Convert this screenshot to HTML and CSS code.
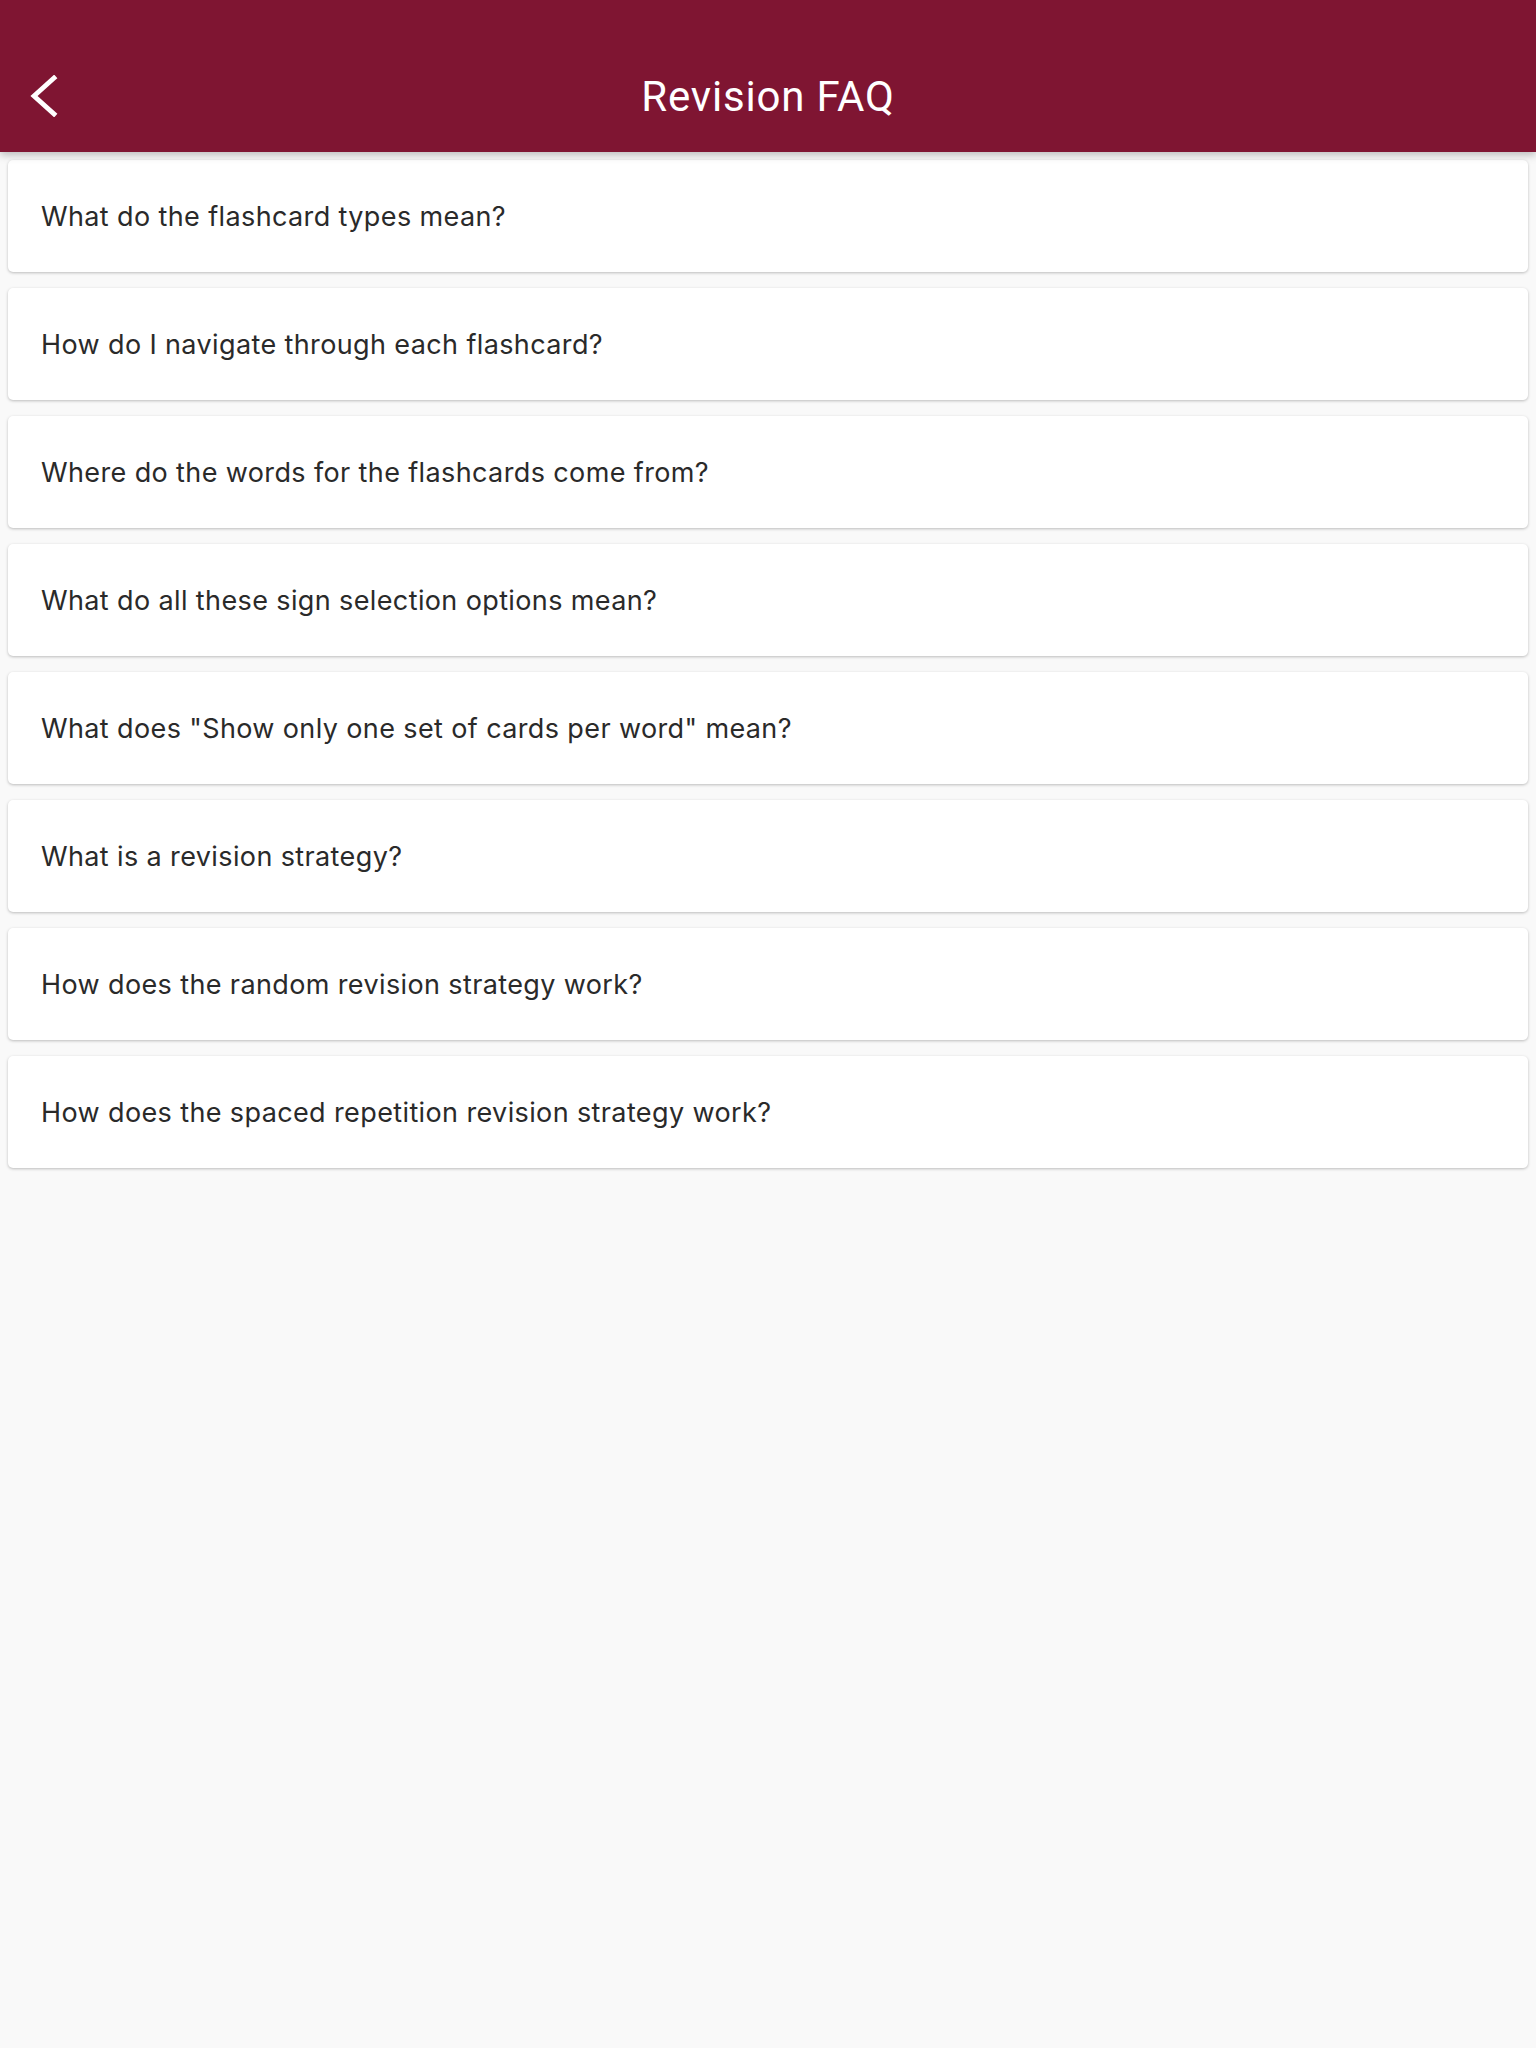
FILE: index.html
```html
<!DOCTYPE html>
<html>
<head>
<meta charset="utf-8">
<link rel="stylesheet" href="styles.css">
</head>
<body>
<header class="appbar">
  <button class="back" aria-label="Back">
    <svg width="28" height="42" viewBox="0 0 28 42"><path d="M24 3 L4 21 L24 39" fill="none" stroke="#fff" stroke-width="4.8" stroke-linecap="square" stroke-linejoin="miter"/></svg>
  </button>
  <h1 class="title">Revision FAQ</h1>
</header>
<main class="list">
  <div class="card">What do the flashcard types mean?</div>
  <div class="card">How do I navigate through each flashcard?</div>
  <div class="card">Where do the words for the flashcards come from?</div>
  <div class="card">What do all these sign selection options mean?</div>
  <div class="card">What does "Show only one set of cards per word" mean?</div>
  <div class="card">What is a revision strategy?</div>
  <div class="card">How does the random revision strategy work?</div>
  <div class="card">How does the spaced repetition revision strategy work?</div>
</main>
</body>
</html>
```
FILE: styles.css
```css
html, body {
  margin: 0;
  padding: 0;
  background: #f9f9f9;
  font-family: Roboto, "Liberation Sans", sans-serif;
}
.appbar {
  position: relative;
  height: 152px;
  background: #7f1532;
  display: flex;
  align-items: center;
  justify-content: center;
  padding-top: 40px;
  box-sizing: border-box;
  box-shadow: 0 3px 8px rgba(0,0,0,0.25);
  z-index: 2;
}
.back {
  position: absolute;
  left: 30px;
  top: 75px;
  background: none;
  border: 0;
  padding: 0;
  display: flex;
}
.title {
  margin: 0;
  color: #fff;
  font-size: 42px;
  font-weight: 400;
  letter-spacing: 0.8px;
}
.list {
  display: flex;
  flex-direction: column;
  gap: 16px;
  padding: 8px 8px;
}
.card {
  height: 112px;
  background: #fff;
  border-radius: 5px;
  box-shadow: 0 1px 3px rgba(0,0,0,0.25);
  display: flex;
  align-items: center;
  padding-left: 33px;
  color: #2a2a2a;
  font-family: Inter, Roboto, sans-serif;
  font-size: 27px;
  letter-spacing: 0.38px;
}
```
